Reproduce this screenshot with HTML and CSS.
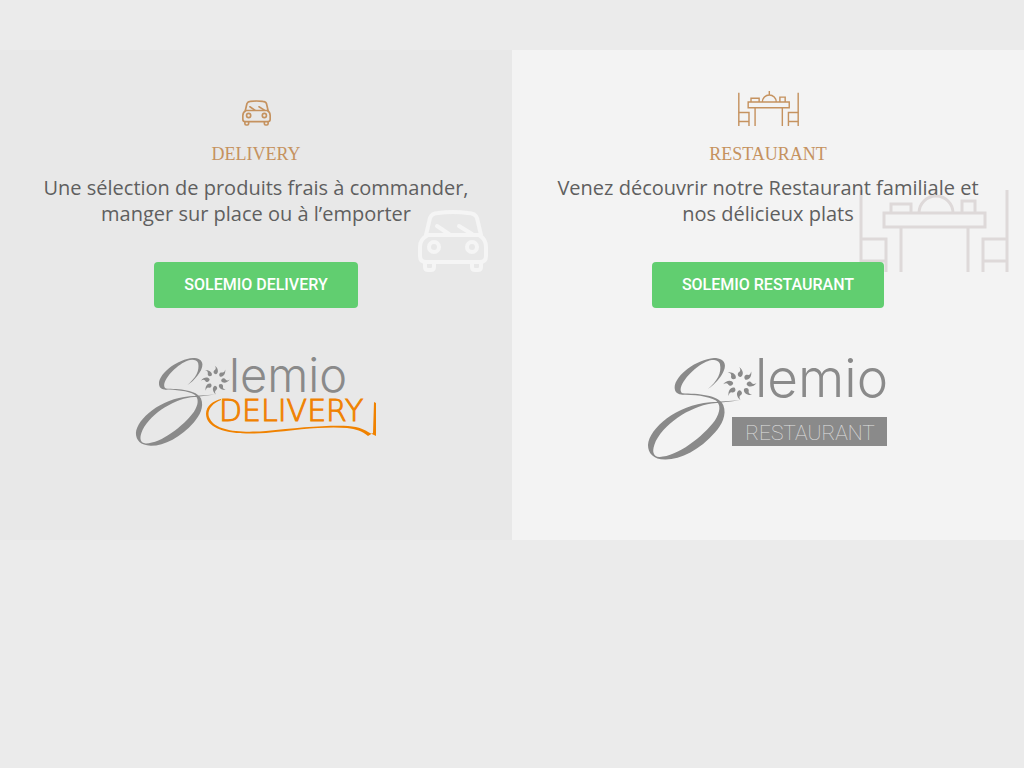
FILE: index.html
```html
<!DOCTYPE html>
<html lang="fr">
<head>
    <meta charset="UTF-8">
    <meta name="viewport" content="width=device-width, initial-scale=1.0">
    <title>Solemio</title>
    <link rel="stylesheet" href="styles.css">
</head>
<body>
    <svg class="defs" aria-hidden="true">
        <defs>
            <g id="car" fill="none" stroke="currentColor" stroke-width="4" stroke-linecap="round" stroke-linejoin="round">
                <path d="M8 25 L12 8 Q14 3 20 3 Q35 1 50 3 Q57 3 59 8 L63 25"/>
                <path d="M10 25 H61 Q68 29 68 37 V46 Q68 52 62 52 H8 Q2 52 2 46 V37 Q2 29 10 25Z"/>
                <circle cx="16" cy="37" r="5"/>
                <circle cx="54" cy="37" r="5"/>
                <path d="M7 53 V57 Q7 60 10 60 H13 Q16 60 16 57 V53 M54 53 V57 Q54 60 57 60 H60 Q63 60 63 57 V53"/>
                <path d="M19 16 L31 24 M41 16 L54 24"/>
            </g>
            <g id="table" fill="none" stroke="currentColor">
                <path d="M2 0 V82 M148 0 V82"/>
                <path d="M2 49 H27 V82 M2 71 H27 M148 49 H124 V82 M148 71 H124"/>
                <path d="M25 23 H126 V37 H25Z M42 37 V82 M109 37 V82"/>
                <path d="M32 23 V14 H52 V23 M103 23 V11 H116 V23"/>
                <path d="M60 23 A17 17 0 0 1 94 23 M77 5 V-4"/>
            </g>
            <path id="ray" d="M-2 -50 C10 -42 13 -25 2 -20 C-8 -22 -9 -32 -1 -36 C3 -40 1 -45 -2 -50Z"/>
            <g id="swash" fill="#8a8a8a">
                <path d="M203 118 C232 94 246 68 240 42 C236 28 215 28 205 33 C170 45 125 90 122 118 C122 128 126 131 135 132 L130 134 C112 134 104 127 104 112 C106 75 170 28 222 24 C240 24 254 30 255 46 C256 70 225 105 203 118Z"/>
                <path d="M125 131 C175 131 235 135 250 165 C262 195 245 225 225 248 C180 300 120 330 75 329 C40 328 24 310 24 285 C28 235 110 165 210 157 L300 151 C270 155 245 158 215 161 C150 170 65 225 43 285 C36 305 40 320 58 321 C110 322 190 260 225 212 C242 185 243 165 228 152 C205 138 160 135 125 134Z"/>
                <g transform="translate(300 101)">
                    <use href="#ray"/>
                    <use href="#ray" transform="rotate(45)"/>
                    <use href="#ray" transform="rotate(90)"/>
                    <use href="#ray" transform="rotate(135)"/>
                    <use href="#ray" transform="rotate(180)"/>
                    <use href="#ray" transform="rotate(225)"/>
                    <use href="#ray" transform="rotate(270)"/>
                    <use href="#ray" transform="rotate(315)"/>
                </g>
            </g>
        </defs>
    </svg>

    <main class="choices">
        <section class="panel panel-delivery">
            <svg class="watermark watermark-car" viewBox="0 0 70 62" aria-hidden="true"><use href="#car"/></svg>
            <div class="icon">
                <svg class="icon-car" viewBox="0 0 70 62" aria-hidden="true"><use href="#car"/></svg>
            </div>
            <h2>DELIVERY</h2>
            <p>Une sélection de produits frais à commander, manger sur place ou à l’emporter</p>
            <a class="button" href="#">SOLEMIO DELIVERY</a>
            <svg class="logo" viewBox="0 0 240 103" role="img" aria-label="Solemio Delivery">
                <use href="#swash" transform="translate(-7 -7) scale(0.288)"/>
                <text class="logo-name logo-name-small" x="93" y="34">lemio</text>
                <text class="logo-delivery" x="83" y="63">DELIVERY</text>
                <path fill="#f08200" d="M85 42 C74 46 70 55 74 61 C80 73 104 75 130 73 C160 70 190 67 212 68 C224 69 229 72 234 75 L240 78 L240 45 L238 44 L237 75 L232 78 C226 73 220 71 211 70 C188 68 160 72 130 75 C100 77 77 74 71 61 C67 50 76 43 85 41Z"/>
            </svg>
        </section>

        <section class="panel panel-restaurant">
            <svg class="watermark watermark-table" viewBox="0 0 150 82" aria-hidden="true"><use href="#table"/></svg>
            <div class="icon">
                <svg class="icon-table" viewBox="0 -4 150 86" aria-hidden="true"><use href="#table"/></svg>
            </div>
            <h2>RESTAURANT</h2>
            <p>Venez découvrir notre Restaurant familiale et nos délicieux plats</p>
            <a class="button" href="#">SOLEMIO RESTAURANT</a>
            <svg class="logo" viewBox="0 0 240 103" role="img" aria-label="Solemio Restaurant">
                <use href="#swash" transform="translate(-8 -8) scale(0.333)"/>
                <text class="logo-name" x="107" y="39">lemio</text>
                <rect x="84" y="59" width="155" height="29" fill="#8a8a8a"/>
                <text class="logo-restaurant" x="162" y="82" text-anchor="middle">RESTAURANT</text>
            </svg>
        </section>
    </main>
</body>
</html>
```

FILE: styles.css
```css
body {
    margin: 0;
    padding-top: 50px;
    background: #ebebeb;
    color: #5f5f5f;
    font-family: "Open Sans", sans-serif;
}
.defs {
    position: absolute;
    width: 0;
    height: 0;
}
.choices {
    display: grid;
    grid-template-columns: 1fr 1fr;
}
.panel {
    position: relative;
    display: flex;
    flex-direction: column;
    align-items: center;
    padding: 40px 40px 79px;
    text-align: center;
}
.panel-delivery {
    background: #e8e8e8;
}
.panel-restaurant {
    background: #f3f3f3;
}
.icon {
    display: flex;
    align-items: flex-end;
    height: 36px;
    margin-bottom: 16px;
    color: #c5925f;
}
.icon-car {
    width: 29px;
    height: 26px;
}
.icon-table {
    width: 61px;
    height: 35px;
    stroke-width: 3.5px;
}
.watermark {
    position: absolute;
}
.watermark-car {
    top: 160px;
    right: 24px;
    width: 70px;
    height: 62px;
    color: #f5f5f5;
}
.watermark-table {
    top: 140px;
    right: 15px;
    width: 150px;
    height: 82px;
    color: #ded9d9;
    stroke-width: 3px;
}
h2, p, .button {
    position: relative;
}
h2 {
    margin: 0 0 9px;
    color: #c5925f;
    font-family: "Liberation Serif", serif;
    font-size: 18px;
    font-weight: 400;
    line-height: 24px;
}
p {
    margin: 0 0 35px;
    font-size: 20px;
    line-height: 26px;
}
.button {
    padding: 12px 30px;
    margin-bottom: 50px;
    border-radius: 4px;
    background: #61ce70;
    color: white;
    font-family: Roboto, sans-serif;
    font-size: 16px;
    font-weight: 500;
    line-height: 22px;
    text-decoration: none;
}
.logo {
    width: 240px;
    height: 103px;
    overflow: visible;
}
.logo-name {
    fill: #8a8a8a;
    font-family: Inter, sans-serif;
    font-size: 53px;
    font-weight: 300;
}
.logo-name-small {
    font-size: 47px;
}
.logo-delivery {
    fill: #f08200;
    stroke: #f08200;
    stroke-width: 1px;
    font-family: "DejaVu Sans", sans-serif;
    font-size: 30px;
    font-weight: 200;
}
.logo-restaurant {
    fill: #e0e0e0;
    font-family: Roboto, sans-serif;
    font-size: 21px;
    font-weight: 100;
}
```
